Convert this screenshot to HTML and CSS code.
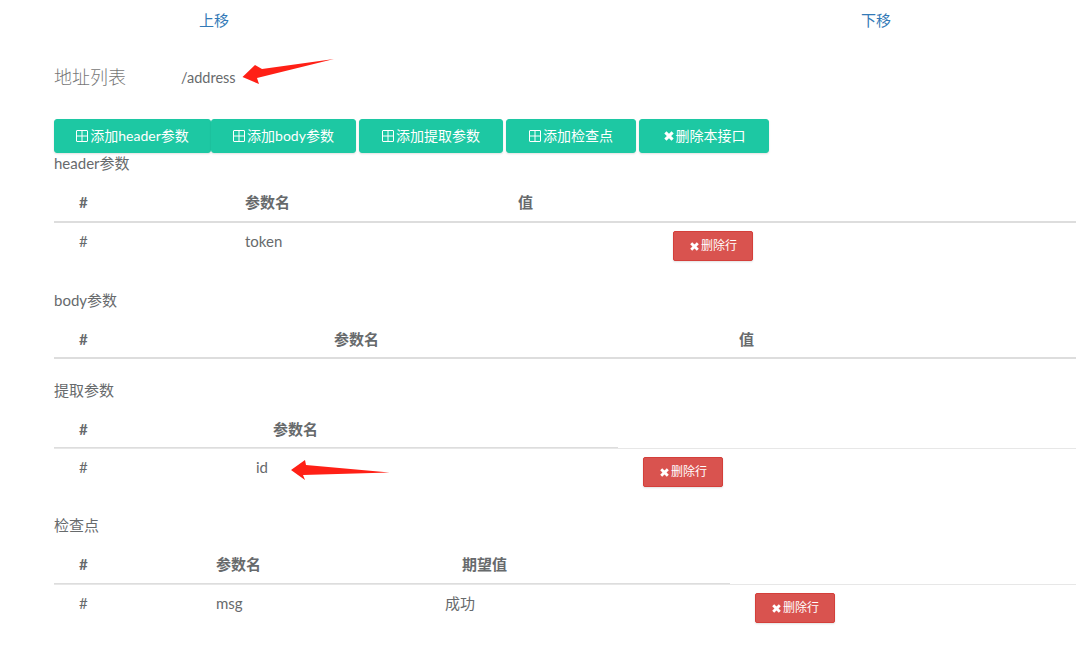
FILE: index.html
```html
<!DOCTYPE html>
<html lang="zh">
<head>
<meta charset="utf-8">
<title>地址列表</title>
<link rel="stylesheet" href="styles.css">
</head>
<body>
<nav class="pager">
  <a class="pager-up" href="#">上移</a>
  <a class="pager-down" href="#">下移</a>
</nav>
<main class="content">
  <header class="title-row">
    <h3 class="title">地址列表</h3>
    <span class="path">/address</span>
  </header>
  <div class="toolbar">
    <button class="btn btn-w157"><svg class="ico" viewBox="0 0 12 12"><path d="M1 .5h10a.5.5 0 0 1 .5.5v10a.5.5 0 0 1-.5.5H1a.5.5 0 0 1-.5-.5V1A.5.5 0 0 1 1 .5zM6 .5v11M.5 6h11"/></svg>添加header参数</button>
    <button class="btn btn-w145"><svg class="ico" viewBox="0 0 12 12"><path d="M1 .5h10a.5.5 0 0 1 .5.5v10a.5.5 0 0 1-.5.5H1a.5.5 0 0 1-.5-.5V1A.5.5 0 0 1 1 .5zM6 .5v11M.5 6h11"/></svg>添加body参数</button>
    <button class="btn btn-w144 gap3"><svg class="ico" viewBox="0 0 12 12"><path d="M1 .5h10a.5.5 0 0 1 .5.5v10a.5.5 0 0 1-.5.5H1a.5.5 0 0 1-.5-.5V1A.5.5 0 0 1 1 .5zM6 .5v11M.5 6h11"/></svg>添加提取参数</button>
    <button class="btn btn-w130 gap3"><svg class="ico" viewBox="0 0 12 12"><path d="M1 .5h10a.5.5 0 0 1 .5.5v10a.5.5 0 0 1-.5.5H1a.5.5 0 0 1-.5-.5V1A.5.5 0 0 1 1 .5zM6 .5v11M.5 6h11"/></svg>添加检查点</button>
    <button class="btn btn-w130 gap3"><svg class="x" viewBox="0 0 10 10"><path d="M2 2l6 6M8 2l-6 6"/></svg>删除本接口</button>
  </div>

  <section class="block block-header">
    <h4 class="label">header参数</h4>
    <div class="thead cols-a"><b>#</b><b class="a2">参数名</b><b class="a3">值</b></div>
    <div class="trow cols-a"><span>#</span><span class="a2">token</span><span></span>
      <button class="del"><svg class="x" viewBox="0 0 10 10"><path d="M2 2l6 6M8 2l-6 6"/></svg>删除行</button></div>
  </section>

  <section class="block block-body">
    <h4 class="label">body参数</h4>
    <div class="thead cols-b"><b>#</b><b>参数名</b><b>值</b></div>
  </section>

  <section class="block block-extract">
    <h4 class="label">提取参数</h4>
    <div class="thead short-e cols-e"><b>#</b><b>参数名</b></div>
    <div class="trow cols-e2"><span>#</span><span>id</span>
      <button class="del"><svg class="x" viewBox="0 0 10 10"><path d="M2 2l6 6M8 2l-6 6"/></svg>删除行</button></div>
  </section>

  <section class="block block-check">
    <h4 class="label">检查点</h4>
    <div class="thead short-c cols-c"><b>#</b><b>参数名</b><b>期望值</b></div>
    <div class="trow cols-c2"><span>#</span><span>msg</span><span>成功</span>
      <button class="del"><svg class="x" viewBox="0 0 10 10"><path d="M2 2l6 6M8 2l-6 6"/></svg>删除行</button></div>
  </section>
</main>

<svg class="arrow arrow-top" viewBox="242 58 92 27"><path d="M334 59 L262 69 L255 65 L242.500 77 L259 84 L257 78 Z"/></svg>
<svg class="arrow arrow-mid" viewBox="290 459 100 22"><path d="M389.500 472.500 L306 465 L305 460 L291 470 L305 480 L303 475 Z"/></svg>
</body>
</html>
```
FILE: styles.css
```css
* { box-sizing: border-box; }
html, body { margin: 0; padding: 0; overflow: hidden; }
body {
  width: 1076px;
  height: 662px;
  position: relative;
  background: #fff;
  color: #676a6c;
  font: 15px/20px Lato, "Noto Sans CJK SC", sans-serif;
}
.pager { display: flex; height: 40px; padding: 10px 0 0 199px; }
.pager a { color: #337ab7; text-decoration: none; }
.pager-down { margin-left: 632px; }
.content { padding-left: 54px; }
.title-row { display: flex; align-items: center; height: 40px; margin-top: 17px; }
.title { margin: 0; width: 127px; font-size: 18px; font-weight: 300; color: #777; }
.path { font-size: 14.500px; margin-top: 2px; }
.toolbar { display: flex; margin-top: 22px; }
.btn {
  height: 34px;
  padding: 0;
  border: 1px solid #1dc8a3;
  border-radius: 3px;
  background: #1dc8a3;
  color: #fff;
  font: 14px/20px Lato, "Noto Sans CJK SC", sans-serif;
  display: flex;
  align-items: center;
  justify-content: center;
  box-shadow: 0 1px 2px rgba(0,0,0,.12);
}
.btn-w157 { width: 157px; }
.btn-w145 { width: 145px; }
.btn-w144 { width: 144px; }
.btn-w130 { width: 130px; }
.gap3 { margin-left: 3px; }
.ico { width: 12px; height: 12px; margin-right: 2px; fill: none; stroke: #fff; stroke-width: 1; }
.x { width: 12px; height: 12px; margin-right: 1px; fill: none; stroke: #fff; stroke-width: 2.6; }
.label { margin: 0; font-size: 15px; font-weight: 400; line-height: 20px; }
.block-header { margin-top: 0; }
.block-body { margin-top: 27px; }
.block-extract { margin-top: 21px; }
.block-check { margin-top: 27px; }
.thead {
  display: grid;
  align-items: center;
  height: 49px;
  padding: 10px 0 0 25px;
  border-bottom: 2px solid #ddd;
}
.block-header .thead, .block-check .thead { height: 50px; }
.thead b { font-weight: 700; }
.trow {
  display: grid;
  align-items: start;
  height: 40px;
  padding: 8px 0 0 25px;
}
.short-e { width: 564px; }
.short-c { width: 676px; }
.block-extract .trow, .block-check .trow { border-top: 1px solid #e7e7e7; margin-top: -1px; }
.cols-a { grid-template-columns: 166px 273px 155px 80px; }
.cols-b { grid-template-columns: 255px 405px 1fr; }
.cols-e { grid-template-columns: 194px 1fr; }
.cols-e2 { grid-template-columns: 177px 387px 80px; }
.cols-c { grid-template-columns: 137px 246px 1fr; }
.cols-c2 { grid-template-columns: 137px 229px 310px 80px; }
.del {
  display: flex;
  align-items: center;
  justify-content: center;
  width: 80px;
  height: 30px;
  padding: 0;
  border: 1px solid #d43f3a;
  border-radius: 2px;
  background: #d9534f;
  color: #fff;
  font: 12px/18px Lato, "Noto Sans CJK SC", sans-serif;
  box-shadow: 0 1px 2px rgba(0,0,0,.12);
}
.del .x { width: 11px; height: 11px; }
.arrow { position: absolute; fill: #ff2016; }
.arrow-top { left: 242px; top: 58px; width: 92px; height: 27px; }
.arrow-mid { left: 290px; top: 459px; width: 100px; height: 22px; }
```
